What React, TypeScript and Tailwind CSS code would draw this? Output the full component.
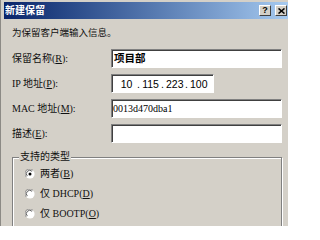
import React from 'react';

const cjk = "font-['Liberation_Serif','Noto_Sans_CJK_SC',serif]";

function Field({ label, children }: { label: React.ReactNode; children: React.ReactNode }) {
  return (
    <div className="flex h-[19px] items-center">
      <div className={`w-[99px] text-[10px] leading-[12px] text-[#111] ${cjk}`}>{label}</div>
      {children}
    </div>
  );
}

function Box({ className = '', children }: { className?: string; children?: React.ReactNode }) {
  return (
    <div
      className={`flex h-[19px] items-center border border-t-[#808080] border-l-[#808080] border-b-white border-r-white bg-white shadow-[inset_1px_1px_0_#404040] ${className}`}
    >
      {children}
    </div>
  );
}

function Radio({ checked, children }: { checked?: boolean; children: React.ReactNode }) {
  return (
    <div className="flex h-[20px] items-center gap-[5px]">
      <svg width="10" height="10" viewBox="0 0 12 12">
        <circle cx="6" cy="6" r="5.5" fill="#fff" />
        <path d="M1.5 9.5 A5.5 5.5 0 0 1 9.5 1.5" fill="none" stroke="#808080" strokeWidth="1" />
        <path d="M2.8 8.5 A4 4 0 0 1 8.5 2.8" fill="none" stroke="#404040" strokeWidth="1" />
        {checked && <circle cx="6" cy="6" r="1.8" fill="#000" />}
      </svg>
      <span className={`text-[10px] leading-[12px] text-[#111] ${cjk}`}>{children}</span>
    </div>
  );
}

const ipParts = ['10', '115', '223', '100'];

export default function App() {
  return (
    <div className="flex h-[226px] w-[288px] flex-col overflow-hidden border-l border-[#8c8a85] bg-[#d4d0c8] pl-[3px] pt-[2px]">
      <div className="flex h-[17px] shrink-0 items-center justify-between bg-gradient-to-r from-[#0a246a] to-[#a6caf0] pl-[1px] pr-[1px]">
        <span className={`text-[10px] font-bold leading-[12px] text-white ${cjk}`}>新建保留</span>
        <div className="flex gap-[4px]">
          <div className="flex h-[11px] w-[12px] items-center justify-center border border-t-white border-l-white border-b-[#404040] border-r-[#404040] bg-[#d4d0c8]">
            <span className="font-['Liberation_Sans',sans-serif] text-[9px] font-bold leading-[9px] text-black">?</span>
          </div>
          <div className="flex h-[11px] w-[12px] items-center justify-center border border-t-white border-l-white border-b-[#404040] border-r-[#404040] bg-[#d4d0c8]">
            <svg width="7" height="6" viewBox="0 0 7 6">
              <path d="M0.5 0.5 L6.5 5.5 M6.5 0.5 L0.5 5.5" stroke="#000" strokeWidth="1.6" />
            </svg>
          </div>
        </div>
      </div>

      <div className="flex flex-col pl-[8px] pr-[6px]">
        <p className={`mt-[8px] text-[9.5px] leading-[12px] text-[#111] ${cjk}`}>为保留客户端输入信息。</p>

        <div className="mt-[10px] flex flex-col gap-[6px]">
          <Field label={<>保留名称(<u>R</u>):</>}>
            <Box className="w-[171px] pl-[2px]">
              <span className={`text-[10.5px] font-semibold leading-[12px] text-black ${cjk}`}>项目部</span>
            </Box>
          </Field>
          <Field label={<>IP 地址(<u>P</u>):</>}>
            <Box className="w-[103px] pl-[6px]">
              <div className="flex font-['Liberation_Sans',sans-serif] text-[10.5px] leading-[12px] text-black">
                {ipParts.map((p, i) => (
                  <React.Fragment key={i}>
                    {i > 0 && <span className="w-[7px] text-center">.</span>}
                    <span className="w-[17px] text-center">{p}</span>
                  </React.Fragment>
                ))}
              </div>
            </Box>
          </Field>
          <Field label={<>MAC 地址(<u>M</u>):</>}>
            <Box className="w-[171px] pl-[1px]">
              <span className="font-['Liberation_Serif',serif] text-[10px] leading-[12px] text-black">0013d470dba1</span>
            </Box>
          </Field>
          <Field label={<>描述(<u>E</u>):</>}>
            <Box className="w-[171px]" />
          </Field>
        </div>

        <fieldset className="mt-[8px] h-[90px] border border-[#808080] pl-[12px] pt-[1px] shadow-[inset_1px_1px_0_#fff,1px_1px_0_#fff]">
          <legend className={`ml-[-6px] bg-[#d4d0c8] px-[1px] text-[10px] leading-[12px] text-[#111] ${cjk}`}>支持的类型</legend>
          <Radio checked>两者(<u>B</u>)</Radio>
          <Radio>仅 DHCP(<u>D</u>)</Radio>
          <Radio>仅 BOOTP(<u>O</u>)</Radio>
        </fieldset>
      </div>
    </div>
  );
}
